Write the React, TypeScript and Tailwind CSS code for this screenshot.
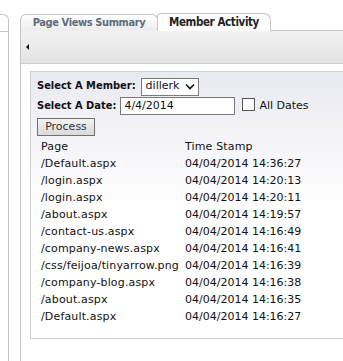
import React from "react";

// Row data for the activity table
const visits: { page: string; stamp: string }[] = [
  { page: "/Default.aspx", stamp: "04/04/2014 14:36:27" },
  { page: "/login.aspx", stamp: "04/04/2014 14:20:13" },
  { page: "/login.aspx", stamp: "04/04/2014 14:20:11" },
  { page: "/about.aspx", stamp: "04/04/2014 14:19:57" },
  { page: "/contact-us.aspx", stamp: "04/04/2014 14:16:49" },
  { page: "/company-news.aspx", stamp: "04/04/2014 14:16:41" },
  { page: "/css/feijoa/tinyarrow.png", stamp: "04/04/2014 14:16:39" },
  { page: "/company-blog.aspx", stamp: "04/04/2014 14:16:38" },
  { page: "/about.aspx", stamp: "04/04/2014 14:16:35" },
  { page: "/Default.aspx", stamp: "04/04/2014 14:16:27" },
];

const App: React.FC = () => {
  return (
    <div className="flex h-[361px] w-[343px] overflow-hidden bg-white font-['DejaVu_Sans',sans-serif] text-[11px] text-[#111]">
      {/* Left neighbouring panel edge */}
      <div className="mt-[14px] w-[9px] shrink-0 rounded-tr-[6px] border-t border-r border-[#c6c6c6]">
        <div className="h-[17px] border-b border-[#c6c6c6]" />
      </div>

      <div className="ml-[11px] flex min-w-0 flex-1 flex-col">
        {/* Tab strip */}
        <div className="flex h-[31px] shrink-0 items-end pt-[13px] font-['DejaVu_Sans_Condensed','DejaVu_Sans',sans-serif] font-bold">
          <div className="flex h-[17px] w-[138px] shrink-0 items-center justify-center rounded-t-[6px] border border-b-0 border-[#c6c6c6] bg-gradient-to-b from-white to-[#ececec] text-[11px] tracking-[-0.4px] text-[#5c6c7c]">
            Page Views Summary
          </div>
          <div className="-ml-px flex h-[18px] w-[114px] shrink-0 items-center justify-center rounded-tr-[7px] rounded-tl-[4px] border border-b-0 border-[#c6c6c6] bg-white text-[11.5px] tracking-[-0.4px] text-[#222]">
            Member Activity
          </div>
          <div className="h-px flex-1 bg-[#c6c6c6]" />
        </div>

        {/* Panel */}
        <div className="flex flex-1 flex-col border-l border-[#c6c6c6]">
          <div className="flex h-[33px] shrink-0 items-center border-b border-[#cdcdcd] bg-gradient-to-b from-[#f2f2f2] to-[#e3e3e3] pl-[5px]">
            <svg width="4" height="6" viewBox="0 0 4 6">
              <path d="M3 0 L0 3 L3 6 Z" fill="#111" />
            </svg>
          </div>

          <div className="ml-[9px] mt-[7px] border-y border-l border-[#d2d2d2] bg-gradient-to-b from-[#e9e9f1] via-white to-white pb-[12px] pl-[6px] pt-[5px]">
            <div className="flex h-[19px] items-center">
              <span className="font-['DejaVu_Sans_Condensed','DejaVu_Sans',sans-serif] font-bold">Select A Member:</span>
              <div className="ml-[5px] flex h-[18px] w-[58px] items-center justify-between border border-[#7a7a7a] bg-white pl-[4px] pr-[3px]">
                <span>dillerk</span>
                <svg width="10" height="7" viewBox="0 0 10 7">
                  <path d="M1 1.5 L5 5.5 L9 1.5" stroke="#111" strokeWidth="1.6" fill="none" />
                </svg>
              </div>
            </div>
            <div className="mt-px flex h-[18px] items-center">
              <span className="font-['DejaVu_Sans_Condensed','DejaVu_Sans',sans-serif] font-bold">Select A Date:</span>
              <div className="ml-[4px] flex h-[18px] w-[115px] items-center border border-[#7a7a7a] bg-white pl-[3px]">
                4/4/2014
              </div>
              <div className="ml-[7px] h-[13px] w-[13px] -translate-y-[2px] border border-[#555] bg-white" />
              <span className="ml-[4px]">All Dates</span>
            </div>
            <button
              type="button"
              className="mt-[3px] flex h-[18px] w-[58px] items-center justify-center border border-[#707070] bg-gradient-to-b from-[#f3f3f3] to-[#dadada] text-[#333]"
            >
              Process
            </button>

            <div className="mt-[3px] pl-[4px] tracking-[0.15px]">
              <div className="flex h-[17px] items-center">
                <span className="w-[144px] shrink-0">Page</span>
                <span>Time Stamp</span>
              </div>
              {visits.map((v, i) => (
                <div key={i} className="flex h-[17px] items-center whitespace-nowrap">
                  <span className="w-[144px] shrink-0">{v.page}</span>
                  <span className="tracking-normal">{v.stamp}</span>
                </div>
              ))}
            </div>
          </div>
        </div>
      </div>
    </div>
  );
};

export default App;
